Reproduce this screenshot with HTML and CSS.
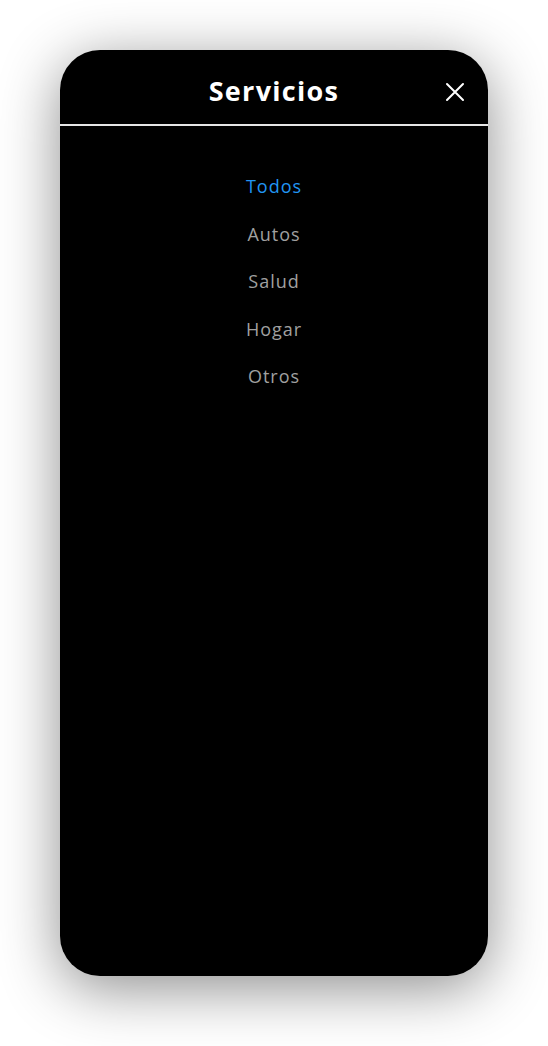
FILE: index.html
```html
<!DOCTYPE html>
<html lang="es">
<head>
<meta charset="utf-8">
<title>Servicios</title>
<link rel="stylesheet" href="styles.css">
</head>
<body>
<div class="stage">
  <div class="panel">
    <header class="head">
      <h1 class="title">Servicios</h1>
      <button class="close" aria-label="Cerrar">
        <svg width="20" height="20" viewBox="0 0 20 20"><path d="M2 2 L18 18 M18 2 L2 18" stroke="#fff" stroke-width="2" stroke-linecap="round"/></svg>
      </button>
    </header>
    <nav class="menu">
      <a class="item active">Todos</a>
      <a class="item">Autos</a>
      <a class="item">Salud</a>
      <a class="item">Hogar</a>
      <a class="item">Otros</a>
    </nav>
  </div>
</div>
</body>
</html>
```
FILE: styles.css
```css
html, body { margin: 0; padding: 0; background: #fff; }
body { font-family: "Open Sans", "DejaVu Sans", sans-serif; }
.stage { width: 548px; height: 1046px; padding: 50px 60px 0; box-sizing: border-box; }
.panel {
  width: 428px; height: 926px; background: #000; border-radius: 40px;
  box-shadow: 0 12px 60px rgba(0,0,0,0.45);
  display: flex; flex-direction: column; overflow: hidden;
}
.head {
  position: relative; height: 76px; border-bottom: 2px solid #e6e6e6;
  display: flex; align-items: center; justify-content: center;
  box-sizing: border-box; padding-top: 6px;
}
.title { margin: 0; color: #fff; font-size: 27px; font-weight: 700; letter-spacing: 1.3px; }
.close {
  position: absolute; right: 23px; top: 32px; width: 20px; height: 20px;
  padding: 0; border: 0; background: none; display: block;
}
.close svg { display: block; }
.menu { display: flex; flex-direction: column; align-items: center; padding-top: 37px; }
.item { color: #a0a0a0; font-size: 18px; line-height: 47.5px; height: 47.5px; letter-spacing: 1px; }
.item.active { color: #2196f3; }
```
